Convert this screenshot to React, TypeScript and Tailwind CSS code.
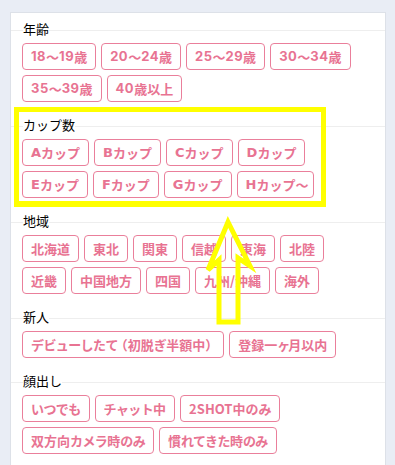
import React from "react";

const sections: { title: string; rows: string[][] }[] = [
  { title: "年齢", rows: [["18～19歳", "20～24歳", "25～29歳", "30～34歳"], ["35～39歳", "40歳以上"]] },
  { title: "カップ数", rows: [["Aカップ", "Bカップ", "Cカップ", "Dカップ"], ["Eカップ", "Fカップ", "Gカップ", "Hカップ～"]] },
  { title: "地域", rows: [["北海道", "東北", "関東", "信越", "東海", "北陸"], ["近畿", "中国地方", "四国", "九州/沖縄", "海外"]] },
  { title: "新人", rows: [["デビューしたて（初脱ぎ半額中）", "登録一ヶ月以内"]] },
  { title: "顔出し", rows: [["いつでも", "チャット中", "2SHOT中のみ"], ["双方向カメラ時のみ", "慣れてきた時のみ"]] },
];

function Label({ text, tightKana }: { text: string; tightKana: boolean }) {
  const parts = text
    .split(/(\d+(?=～|歳)|^[A-H](?=カ)|[（）ヶ]|～$|[\u3040-\u30ff]+)/)
    .filter((p) => p !== undefined && p !== "");
  const tight = tightKana && !text.startsWith("2SHOT");
  return (
    <>
      {parts.map((p, i) => {
        if (/^\d+$/.test(p) && text.includes("歳")) {
          return (
            <span key={i} className="tracking-[0.5px]" style={{ fontFamily: 'Inter, "Noto Sans", sans-serif' }}>
              {p}
            </span>
          );
        }
        if (/^[A-H]$/.test(p)) {
          return (
            <span key={i} style={{ fontFamily: '"DejaVu Sans", sans-serif' }}>
              {p}
            </span>
          );
        }
        if (p === "）") {
          return (
            <span key={i} className="tracking-[-3px]">
              {p}
            </span>
          );
        }
        if (p === "ヶ") {
          return (
            <span key={i} className="tracking-[-2px]">
              {p}
            </span>
          );
        }
        if (p === "～" && text.includes("カップ")) {
          return (
            <span key={i} className="tracking-[-3px]">
              {p}
            </span>
          );
        }
        if (tight && /^[\u3040-\u30ff]+$/.test(p)) {
          if (parts[i + 1] === "（") {
            return (
              <span key={i}>
                <span className="tracking-[-0.6px]">{p.slice(0, -1)}</span>
                <span className="tracking-[-3.6px]">{p.slice(-1)}</span>
              </span>
            );
          }
          return (
            <span key={i} className="tracking-[-0.6px]">
              {p}
            </span>
          );
        }
        return <span key={i}>{p}</span>;
      })}
    </>
  );
}

function Header({ title }: { title: string }) {
  return (
    <div className="flex items-center h-[16px]">
      <span className="w-[12px] h-px bg-[#eeeeee] mt-[2px]" />
      <span className="text-[13px] leading-[16px] text-black">{title}</span>
      <span className="flex-1 h-px bg-[#eeeeee] mt-[2px]" />
    </div>
  );
}

export default function App() {
  return (
    <div
      className="relative w-[395px] h-[465px] overflow-hidden bg-[#e9edf5] px-[10px] pt-[12px]"
      style={{ fontFamily: '"Noto Sans CJK JP", "Noto Sans", sans-serif' }}
    >
      <div className="w-[376px] min-h-[470px] bg-white border border-[#dde1e8] pt-[8px]">
        {sections.map((s, i) => (
          <div key={s.title} className={i > 0 ? "mt-[15px]" : ""}>
            <Header title={s.title} />
            <div className="pl-[11px] mt-[6px] flex flex-col gap-[5px]">
              {s.rows.map((row, j) => (
                <div key={j} className="flex gap-[5px]">
                  {row.map((b) => (
                    <div
                      key={b}
                      className="h-[27px] px-[8px] flex items-center border border-[#ea7f9b] rounded-[4px] text-[13px] font-bold text-[#e87392] whitespace-nowrap"
                    >
                      <Label text={b} tightKana={s.title !== "カップ数"} />
                    </div>
                  ))}
                </div>
              ))}
            </div>
          </div>
        ))}
      </div>

      <div className="absolute left-[14px] top-[107px] w-[312px] h-[100px] border-[5px] border-b-[6px] border-[#ffff00]" />

      <svg className="absolute left-0 top-0" width="395" height="465" viewBox="0 0 395 465">
        <polygon
          points="228,222 250,266 238,258 238,322 219,322 219,260 208,270"
          fill="none"
          stroke="#ffff00"
          strokeWidth="5"
          strokeLinejoin="miter"
        />
      </svg>
    </div>
  );
}
